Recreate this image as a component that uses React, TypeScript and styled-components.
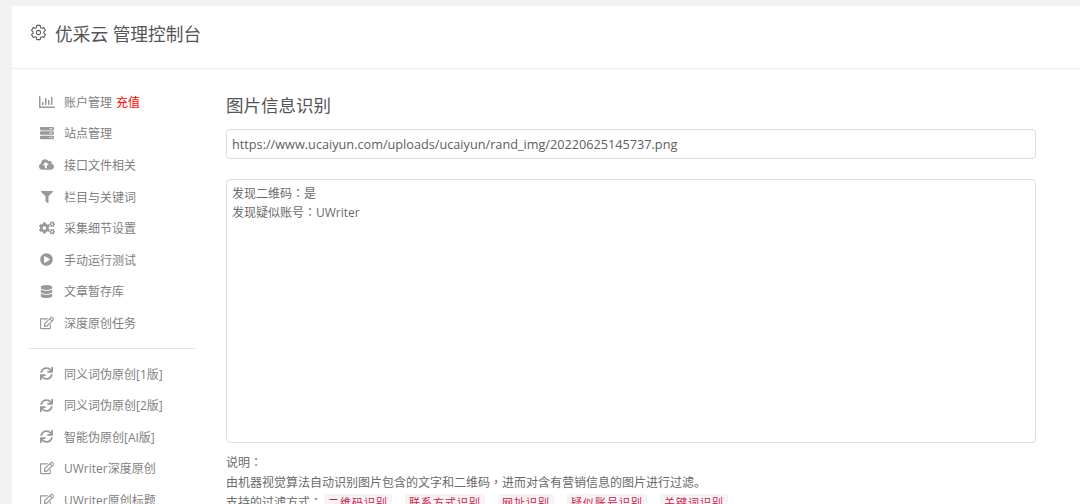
import React from "react";
import styled, { createGlobalStyle } from "styled-components";
import { FaRegChartBar, FaServer, FaCloudUploadAlt, FaFilter, FaCogs, FaPlayCircle, FaDatabase, FaRegEdit, FaSync } from "react-icons/fa";
import { IoSettingsOutline } from "react-icons/io5";

const Global = createGlobalStyle`
  html, body { margin: 0; padding: 0; height: 504px; overflow: hidden; background: #f1f1f1; }
  * { box-sizing: border-box; }
  body { font-family: "Open Sans", "Noto Sans CJK SC", sans-serif; color: #666; }
`;
const Page = styled.div`
  height: 504px; padding: 6px 0 0 12px; overflow: hidden;
`;
const Card = styled.div`
  background: #fff; height: 600px;
`;
const Header = styled.header`
  height: 63px; border-bottom: 1px solid #eee; display: flex; align-items: center;
  padding: 0 0 9px 18px; gap: 8px; font-size: 17.7px; color: #555;
`;
const Body = styled.div`
  display: flex; padding-top: 17px;
`;
const Sidebar = styled.nav`
  width: 214px; flex: none; padding-left: 17px;
`;
const Group = styled.ul`
  list-style: none; margin: 0; padding: 0;
`;
const Item = styled.li`
  height: 31.6px; display: flex; align-items: center; font-size: 12px; color: #808080; white-space: nowrap;
`;
const IconSlot = styled.span<{ $size: number }>`
  width: 17px; margin: 0 9px 0 9px; flex: none; display: flex; align-items: center; justify-content: center;
  color: #999; font-size: ${p => p.$size}px;
`;
const Recharge = styled.span`
  color: #f00; margin-left: 4px;
`;
const Divider = styled.hr`
  width: 167px; margin: 9px 0 9px; border: 0; border-top: 1px solid #e5e5e5;
`;
const Main = styled.main`
  width: 810px; flex: none;
`;
const Title = styled.h2`
  margin: 0; height: 43px; padding-top: 7px; font-size: 17.5px; line-height: 24px; font-weight: 400; color: #555;
`;
const UrlField = styled.div`
  height: 30px; border: 1px solid #ddd; border-radius: 4px; padding: 0 5px; font-size: 12.7px; line-height: 29px; color: #606060;
`;
const ResultBox = styled.div`
  height: 264px; margin-top: 20px; border: 1px solid #ddd; border-radius: 4px; padding: 4px 5px; font-size: 12px; line-height: 18px; color: #6a6a6a;
`;
const Notes = styled.div`
  margin-top: 9px; font-size: 12px; line-height: 19px; color: #6a6a6a;
`;
const Punct = styled.span`
  font-family: "Noto Sans CJK TC", sans-serif;
`;
const Tag = styled.code`
  font-family: inherit; font-size: 11px; background: #f9f2f4; color: #c7254e; padding: 1px 4px; margin: 0 11px 0 2px; border-radius: 3px; letter-spacing: 1px;
`;

type Entry = readonly [React.ReactNode, number, string];
const top: readonly Entry[] = [
  [<FaServer />, 14, "站点管理"],
  [<FaCloudUploadAlt />, 15, "接口文件相关"],
  [<FaFilter />, 12, "栏目与关键词"],
  [<FaCogs />, 16, "采集细节设置"],
  [<FaPlayCircle />, 13, "手动运行测试"],
  [<FaDatabase />, 13, "文章暂存库"],
  [<FaRegEdit />, 14, "深度原创任务"],
];
const bottom: readonly Entry[] = [
  [<FaSync />, 13, "同义词伪原创[1版]"],
  [<FaSync />, 13, "同义词伪原创[2版]"],
  [<FaSync />, 13, "智能伪原创[AI版]"],
  [<FaRegEdit />, 14, "UWriter深度原创"],
  [<FaRegEdit />, 14, "UWriter原创标题"],
];
const tags = ["二维码识别", "联系方式识别", "网址识别", "疑似账号识别", "关键词识别"];

export default function App() {
  return (
    <Page>
      <Global />
      <Card>
        <Header><IoSettingsOutline size={17} />优采云 管理控制台</Header>
        <Body>
          <Sidebar>
            <Group>
              <Item><IconSlot $size={16}><FaRegChartBar /></IconSlot>账户管理<Recharge>充值</Recharge></Item>
              {top.map(([icon, size, label]) => <Item key={label}><IconSlot $size={size}>{icon}</IconSlot>{label}</Item>)}
            </Group>
            <Divider />
            <Group>
              {bottom.map(([icon, size, label]) => <Item key={label}><IconSlot $size={size}>{icon}</IconSlot>{label}</Item>)}
            </Group>
          </Sidebar>
          <Main>
            <Title>图片信息识别</Title>
            <UrlField>https://www.ucaiyun.com/uploads/ucaiyun/rand_img/20220625145737.png</UrlField>
            <ResultBox>发现二维码<Punct>：</Punct>是<br />发现疑似账号<Punct>：</Punct>UWriter</ResultBox>
            <Notes>
              说明<Punct>：</Punct><br />
              由机器视觉算法自动识别图片包含的文字和二维码<Punct>，</Punct>进而对含有营销信息的图片进行过滤。<br />
              支持的过滤方式<Punct>：</Punct>{tags.map(t => <Tag key={t}>{t}</Tag>)}
            </Notes>
          </Main>
        </Body>
      </Card>
    </Page>
  );
}
